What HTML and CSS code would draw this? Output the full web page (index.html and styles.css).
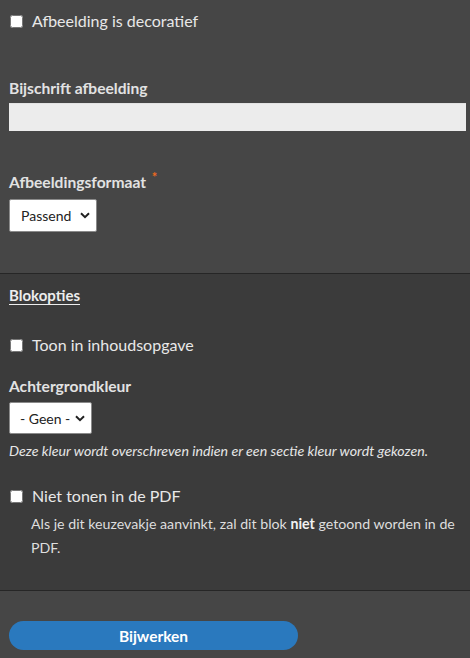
FILE: index.html
```html
<!DOCTYPE html>
<html lang="nl">
<head>
<meta charset="utf-8">
<title>Blok bewerken</title>
<link rel="stylesheet" href="styles.css">
</head>
<body>
<form class="editor">
  <section class="panel panel-main">
    <label class="check">
      <input type="checkbox" class="check-box">
      <span>Afbeelding is decoratief</span>
    </label>

    <label class="field-label label-caption" for="caption">Bijschrift afbeelding</label>
    <input id="caption" class="text-input" type="text">

    <label class="field-label label-format" for="format">Afbeeldingsformaat <span class="required">*</span></label>
    <select id="format" class="select select-format">
      <option>Passend</option>
    </select>
  </section>

  <section class="panel panel-options">
    <h3 class="section-title">Blokopties</h3>

    <label class="check check-toc">
      <input type="checkbox" class="check-box">
      <span>Toon in inhoudsopgave</span>
    </label>

    <label class="field-label label-bg" for="bgcolor">Achtergrondkleur</label>
    <select id="bgcolor" class="select select-bg">
      <option>- Geen -</option>
    </select>
    <p class="hint">Deze kleur wordt overschreven indien er een sectie kleur wordt gekozen.</p>

    <label class="check check-pdf">
      <input type="checkbox" class="check-box">
      <span>Niet tonen in de PDF</span>
    </label>
    <p class="description">Als je dit keuzevakje aanvinkt, zal dit blok <b>niet</b> getoond worden in de PDF.</p>
  </section>

  <div class="panel panel-actions">
    <button type="button" class="btn-primary">Bijwerken</button>
  </div>
</form>
</body>
</html>
```

FILE: styles.css
```css
html, body {
  margin: 0;
  padding: 0;
}

body {
  background: #464646;
  color: #e6e6e6;
  font-family: Lato, "Open Sans", "Liberation Sans", sans-serif;
  font-size: 16px;
}

.editor {
  display: flex;
  flex-direction: column;
}

.panel {
  display: flex;
  flex-direction: column;
  align-items: flex-start;
  padding: 0 4px 0 9px;
}

.panel-main {
  background: #464646;
  padding-top: 9px;
  padding-bottom: 41px;
  border-bottom: 1px solid #262626;
}

.panel-options {
  background: #3b3b3b;
  padding-top: 11px;
  padding-bottom: 30px;
  border-bottom: 1px solid #262626;
}

.panel-actions {
  background: #464646;
  padding-top: 30px;
  padding-bottom: 20px;
}

/* checkbox rows */
.check {
  display: flex;
  align-items: center;
  height: 24px;
  line-height: 24px;
  font-size: 16px;
  color: #e8e8e8;
}

.check-box {
  width: 13px;
  height: 13px;
  margin: 0 9px 0 1px;
}

.check-toc {
  margin-top: 28px;
}

.check-pdf {
  margin-top: 23px;
}

/* labels */
.field-label {
  display: block;
  font-weight: 700;
  font-size: 15.6px;
  line-height: 20px;
  height: 20px;
  color: #e2e2e2;
}

.label-caption {
  margin-top: 45px;
}

.label-format {
  margin-top: 41px;
}

.label-bg {
  margin-top: 19px;
}

.required {
  position: relative;
  top: -6px;
  color: #ef6a1f;
  font-size: 13px;
  margin-left: 2px;
}

.text-input {
  box-sizing: border-box;
  width: 457px;
  height: 28px;
  margin-top: 5px;
  border: 0;
  border-top: 1px solid #e2e2e2;
  background: #ececec;
  font: inherit;
}

/* select boxes */
.select {
  box-sizing: border-box;
  appearance: none;
  -webkit-appearance: none;
  height: 33px;
  margin-top: 7px;
  padding: 0 18px 0 11px;
  border: 1px solid #8a8a8a;
  border-radius: 2px;
  background-color: #ffffff;
  background-image: url("data:image/svg+xml,%3Csvg xmlns='http://www.w3.org/2000/svg' width='10' height='7' viewBox='0 0 10 7'%3E%3Cpath d='M1 1.2 5 5.2 9 1.2' fill='none' stroke='%23222' stroke-width='2'/%3E%3C/svg%3E");
  background-repeat: no-repeat;
  background-position: right 6px center;
  font-family: inherit;
  font-size: 14px;
  color: #222;
}

.select-format {
  width: 88px;
}

.select-bg {
  width: 83px;
  height: 32px;
  margin-top: 6px;
  padding-left: 10px;
}

.section-title {
  margin: 0;
  font-size: 15px;
  line-height: 20px;
  font-weight: 700;
  text-decoration: underline;
  text-underline-offset: 3px;
  color: #ededed;
}

.hint {
  margin: 7px 0 0;
  font-size: 14.2px;
  line-height: 20px;
  font-style: italic;
  color: #e6e6e6;
}

.description {
  margin: 4px 0 0 22px;
  font-size: 14.2px;
  line-height: 24px;
  color: #dedede;
}

.description b {
  color: #f2f2f2;
}

.btn-primary {
  width: 289px;
  height: 29px;
  border: 0;
  border-radius: 15px;
  background: #2a79be;
  color: #ffffff;
  font-family: inherit;
  font-size: 15.5px;
  font-weight: 700;
  cursor: pointer;
}
```
